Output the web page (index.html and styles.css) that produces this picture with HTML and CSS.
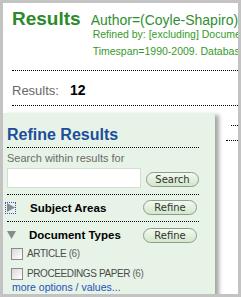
FILE: index.html
```html
<!DOCTYPE html>
<html>
<head>
<meta charset="utf-8">
<link rel="stylesheet" href="styles.css">
</head>
<body>
<div class="page">
  <div class="head">
    <h1 class="title">Results</h1>
    <div class="query">
      <div class="q-main">Author=(Coyle-Shapiro)</div>
      <div class="q-sub">Refined by: [excluding] Document Types=( MEETING ABSTRACT )</div>
      <div class="q-sub q-sub2">Timespan=1990-2009. Databases=SCI-EXPANDED, SSCI</div>
    </div>
  </div>
  <div class="rule rule-top"></div>
  <div class="count"><span class="count-label">Results:</span><span class="count-num">12</span></div>
  <div class="rule rule-bottom"></div>
  <div class="body-row">
    <div class="panel">
      <h2 class="panel-title">Refine Results</h2>
      <div class="rule"></div>
      <div class="search-label">Search within results for</div>
      <div class="search-row">
        <input class="search-input" type="text">
        <span class="pill pill-search">Search</span>
      </div>
      <div class="rule rule-sep1"></div>
      <div class="facet facet-closed">
        <span class="toggle toggle-right"><svg width="8" height="9" viewBox="0 0 8 9"><polygon points="0,0 8,4.5 0,9" fill="#8a8a8a"/></svg></span>
        <span class="facet-name facet-name1">Subject Areas</span>
        <span class="pill pill-refine">Refine</span>
      </div>
      <div class="rule rule-sep2"></div>
      <div class="facet facet-open">
        <span class="toggle toggle-down"><svg width="9" height="8" viewBox="0 0 9 8"><polygon points="0,0 9,0 4.5,8" fill="#8a8a8a"/></svg></span>
        <span class="facet-name facet-name2">Document Types</span>
        <span class="pill pill-refine">Refine</span>
      </div>
      <div class="check-row check-first"><span class="checkbox"></span><span class="check-text">ARTICLE <span class="check-count">(6)</span></span></div>
      <div class="check-row check-second"><span class="checkbox"></span><span class="check-text">PROCEEDINGS PAPER <span class="check-count">(6)</span></span></div>
      <a class="more" href="#">more options / values...</a>
    </div>
    <div class="main">
      <div class="main-dot"></div>
      <div class="main-rule"></div>
    </div>
  </div>
</div>
</body>
</html>
```

FILE: styles.css
```css
html, body {
  margin: 0;
  padding: 0;
}
body {
  background: #c3c3c3;
  padding: 3px;
  width: 235px;
  height: 291px;
  overflow: hidden;
  font-family: "Liberation Sans", Arial, sans-serif;
}
.page {
  width: 235px;
  height: 291px;
  background: #ffffff;
  overflow: hidden;
}
.head {
  display: flex;
  align-items: baseline;
  padding: 9px 0 0 9px;
}
.title {
  margin: 0 10px 0 0;
  font-size: 19px;
  line-height: 13px;
  font-weight: bold;
  color: #2b8b2b;
  white-space: nowrap;
}
.query {
  flex: 1;
  min-width: 0;
  overflow: hidden;
  white-space: nowrap;
}
.q-main {
  font-size: 14px;
  line-height: 16px;
  color: #2f8f2f;
}
.q-sub {
  font-size: 10.5px;
  line-height: 12px;
  color: #369a2a;
  padding-left: 2px;
}
.q-sub2 {
  margin-top: 5px;
}
.rule {
  border-top: 1px dotted #000;
  height: 0;
}
.rule-top {
  margin: 13px 0 0 9px;
}
.count {
  display: flex;
  align-items: baseline;
  margin: 11px 0 0 9px;
  line-height: 16px;
}
.count-label {
  font-size: 13px;
  color: #666;
  width: 58px;
}
.count-num {
  font-size: 14px;
  font-weight: bold;
  color: #000;
}
.rule-bottom {
  margin: 6px 0 0 9px;
}
.body-row {
  display: flex;
  margin-top: 7px;
}
.panel {
  flex: 0 0 192px;
  height: 190px;
  padding: 12px 16px 0 4px;
  background: #e7f3e7;
  box-shadow: 4px 2px 4px rgba(0, 0, 0, 0.35);
}
.panel-title {
  margin: 0 0 3px 0;
  font-size: 16px;
  line-height: 19px;
  font-weight: bold;
  color: #1c4d9d;
}
.search-label {
  margin-top: 4px;
  font-size: 11px;
  line-height: 13px;
  color: #6a6a6a;
}
.search-row {
  display: flex;
  align-items: flex-end;
  gap: 5px;
  margin-top: 3px;
}
.search-input {
  box-sizing: border-box;
  width: 134px;
  height: 20px;
  margin: 0;
  border: 1px solid #d4dcd4;
  background: #fff;
  padding: 0;
}
.pill {
  box-sizing: border-box;
  display: flex;
  align-items: center;
  justify-content: center;
  height: 15px;
  border: 1px solid #8f9c8f;
  border-radius: 8px;
  background: linear-gradient(#f2f9ef, #d2e8cb);
  font-family: "DejaVu Sans", Verdana, sans-serif;
  font-size: 10px;
  color: #333;
}
.pill-search {
  width: 53px;
  margin-bottom: 1px;
}
.pill-refine {
  width: 54px;
  margin-left: auto;
  margin-right: 2px;
}
.rule-sep1 {
  margin-top: 6px;
}
.facet {
  display: flex;
  align-items: center;
  height: 15px;
  margin-top: 5px;
}
.toggle {
  display: flex;
  align-items: center;
  justify-content: center;
}
.toggle-right {
  box-sizing: border-box;
  width: 11px;
  height: 12px;
  margin-left: -2px;
  outline: 1px dotted #3a55c0;
  outline-offset: -1px;
}
.toggle-down {
  width: 9px;
  height: 8px;
}
.facet-name {
  font-size: 11.5px;
  line-height: 14px;
  font-weight: bold;
  color: #000;
}
.facet-name1 {
  margin-left: 14px;
}
.facet-name2 {
  margin-left: 13px;
}
.rule-sep2 {
  margin-top: 6px;
}
.facet-open {
  margin-top: 5px;
  height: 16px;
}
.check-row {
  display: flex;
  align-items: center;
  height: 13px;
  margin-left: 4px;
}
.check-first {
  margin-top: 4px;
}
.check-second {
  margin-top: 7px;
}
.checkbox {
  box-sizing: border-box;
  width: 12px;
  height: 12px;
  border: 1px solid #8a8a8a;
  background: linear-gradient(135deg, #d8d8d8, #ffffff);
}
.check-text {
  margin-left: 4px;
  font-size: 10px;
  letter-spacing: -0.4px;
  color: #4a4a4a;
}
.check-count {
  color: #666;
}
.more {
  display: block;
  margin: 1px 0 0 5px;
  font-size: 10.5px;
  line-height: 12px;
  color: #2252b8;
  text-decoration: none;
}
.main {
  flex: 1;
  position: relative;
}
.main-dot {
  margin: 12px 0 0 16px;
  border-top: 1px dotted #000;
}
.main-rule {
  margin: 14px 0 0 11px;
  border-top: 1px dotted #000;
}
```
